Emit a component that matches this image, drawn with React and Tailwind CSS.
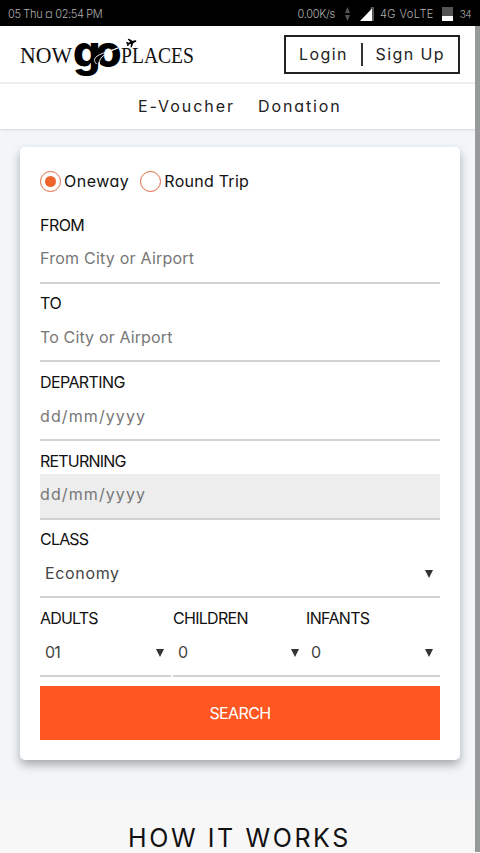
import { IoAirplane } from "react-icons/io5";

function StatusBar() {
  return (
    <div className="flex h-[26px] items-center bg-black pl-2 pr-[9px] pt-0.5 text-[11px] font-light text-[#b0b0b0]">
      <span className="tracking-[-0.35px]">05 Thu ¤ 02:54 PM</span>
      <span className="ml-auto tracking-[-0.3px]">0.00K/s</span>
      <svg className="ml-2.5 h-4 w-[5px]" viewBox="0 0 5 16" fill="#555">
        <path d="M2.5 1 5 7H0zM2.5 15 5 9H0z" />
      </svg>
      <svg className="ml-2.5 h-[14px] w-[14px]" viewBox="0 0 14 14">
        <path d="M11 0H14V14H8z" fill="#555" />
        <path d="M12 1.500V14H0z" fill="#fff" />
      </svg>
      <span className="ml-1.5 tracking-[0.45px]">4G VoLTE</span>
      <span className="ml-2 flex h-[14px] w-[11px] items-end bg-[#555]">
        <span className="h-[5px] w-full bg-white" />
      </span>
      <span className="ml-[7px] text-[10px] tracking-[-0.6px]">34</span>
    </div>
  );
}

function Logo() {
  return (
    <div className="relative h-[54px] w-[180px]">
      <svg className="h-full w-full overflow-visible" viewBox="0 0 180 54" fill="#111">
        <g fontFamily="Liberation Serif, serif" fontSize="22.500">
          <text x="0" y="35.500" textLength="52" lengthAdjust="spacingAndGlyphs">NOW</text>
          <text x="101" y="35.500" textLength="73" lengthAdjust="spacingAndGlyphs">PLACES</text>
        </g>
        <text x="53" y="39.500" fontFamily="Inter, sans-serif" fontWeight="800" fontSize="43" letterSpacing="-5.500" fill="#000">go</text>
        <path d="M76.500 37C69 29 84 26 98 21C88 25 78 30 79.500 37" fill="none" stroke="#fff" strokeWidth="0.900" />
      </svg>
      <IoAirplane className="absolute left-[106px] top-[10px] h-[11px] w-[11px] -rotate-[20deg]" />
    </div>
  );
}

function Header() {
  return (
    <header className="bg-white">
      <div className="flex h-[58px] items-center justify-between border-b-2 border-[#f0f0f0] pl-5 pr-[15px]">
        <Logo />
        <div className="flex h-[39px] w-[176px] items-center justify-between border-2 border-[#222] pl-[13px] pr-[13px] text-base text-[#222]">
          <span className="tracking-[1.4px]">Login</span>
          <span className="h-[23px] w-0.5 bg-[#333]" />
          <span className="tracking-[1.4px]">Sign Up</span>
        </div>
      </div>
      <nav className="flex h-[45px] items-center gap-[23px] pb-0.5 pl-[138px] text-base text-[#222] shadow-sm">
        <span className="tracking-[1.95px]">E-Voucher</span>
        <span className="tracking-[1.9px]">Donation</span>
      </nav>
    </header>
  );
}

function Radio({ label, checked, className }) {
  return (
    <label className="flex items-center gap-[3px]">
      <span className="flex h-[21px] w-[21px] items-center justify-center rounded-full border-[1.5px] border-[#dd6b42]">
        {checked && <span className="h-[11px] w-[11px] rounded-full bg-[#f0642b]" />}
      </span>
      <span className={`text-base text-[#111] ${className}`}>{label}</span>
    </label>
  );
}

function Field({ label, children, labelClass = "tracking-[-0.8px]", className = "" }) {
  return (
    <div className="flex h-[78.700px] flex-col">
      <div className={`mt-[7.700px] h-[25px] text-base leading-6 text-[#111] ${labelClass}`}>{label}</div>
      <div className={`flex h-[46px] items-center justify-between border-b-2 border-[#d2d2d2] pb-[3px] text-base ${className}`}>
        {children}
      </div>
    </div>
  );
}

function Caret() {
  return (
    <svg className="mr-[7px] mt-[3px] h-2 w-2" viewBox="0 0 8 8" fill="#333">
      <path d="M0 0H8L4 8z" />
    </svg>
  );
}

export default function App() {
  return (
    <div className="flex h-[853px] w-[480px] flex-col overflow-hidden bg-white font-['Inter','Liberation_Sans',sans-serif] [font-feature-settings:'cv11']">
      <StatusBar />
      <div className="flex h-[826px]">
        <div className="flex w-[475px] shrink-0 flex-col bg-[#f2f6f8]">
          <Header />
          <main className="ml-5 mt-[18px] h-[613px] w-[440px] shrink-0 rounded-[5px] bg-white px-5 pt-[22px] shadow-[0_5px_10px_rgba(0,0,0,0.3)]">
            <div className="flex h-9 items-start gap-[11px]">
              <Radio label="Oneway" checked className="tracking-[0.5px]" />
              <Radio label="Round Trip" className="tracking-[0.25px]" />
            </div>
            <Field label="FROM" labelClass="tracking-[-0.55px]"><span className="tracking-[0.23px] text-[#777]">From City or Airport</span></Field>
            <Field label="TO" labelClass="tracking-[-0.35px]"><span className="tracking-[0.14px] text-[#777]">To City or Airport</span></Field>
            <Field label="DEPARTING" labelClass="tracking-[-0.6px]"><span className="tracking-[1.1px] text-[#777]">dd/mm/yyyy</span></Field>
            <Field label="RETURNING" className="bg-[#ededed]"><span className="tracking-[1.1px] text-[#777]">dd/mm/yyyy</span></Field>
            <Field label="CLASS"><span className="pl-[5px] tracking-[0.65px] text-[#444]">Economy</span><Caret /></Field>
            <div className="grid grid-cols-[131px_133px_134px]">
              <Field label="ADULTS"><span className="pl-[5px] tracking-[-0.8px] text-[#444]">01</span><Caret /></Field>
              <div className="ml-0.5 mr-[-2px]">
                <Field label="CHILDREN" labelClass="tracking-[-0.7px]"><span className="pl-[5px] text-[#444]">0</span><Caret /></Field>
              </div>
              <div className="ml-0.5 mr-[-2px]">
                <Field label="INFANTS" labelClass="tracking-[-0.65px]"><span className="pl-[5px] text-[#444]">0</span><Caret /></Field>
              </div>
            </div>
            <button className="mt-[9px] h-[54px] w-full bg-[#ff5722] text-base tracking-[-0.6px] text-white">SEARCH</button>
          </main>
          <section className="mt-[39px] flex-1 bg-[#f7f7f7] pl-[128px] pt-[23px] text-[25px] leading-8 tracking-[2.6px] text-[#111]">
            HOW IT WORKS
          </section>
        </div>
        <div className="w-[5px] bg-[#969a9b]" />
      </div>
    </div>
  );
}
